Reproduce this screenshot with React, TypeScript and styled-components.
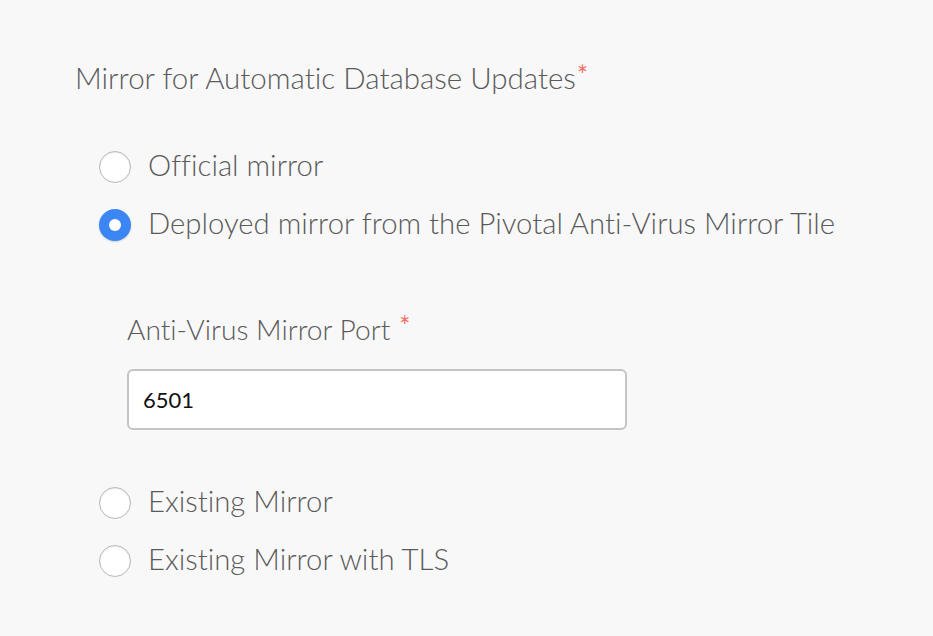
import React from "react";
import styled, { createGlobalStyle } from "styled-components";

const Global = createGlobalStyle`
  html, body { margin: 0; padding: 0; background: #f8f8f8; }
  body {
    font-family: "Lato", "Open Sans", sans-serif;
    font-variant-ligatures: none;
    font-feature-settings: "liga" 0, "clig" 0;
  }
`;

const Page = styled.div`
  width: 933px;
  height: 636px;
  box-sizing: border-box;
  padding: 58px 0 0 75px;
  background: #f8f8f8;
  color: #666666;
  overflow: hidden;
`;

const Title = styled.div`
  font-size: 29.5px;
  line-height: 40px;
  height: 40px;
  font-weight: 300;
  color: #5a5a5a;
`;

const Star = styled.span<{ $gap?: boolean }>`
  color: #f26b61;
  font-size: 26px;
  font-weight: 400;
  vertical-align: top;
  position: relative;
  top: -3px;
  margin-left: ${(p) => (p.$gap ? "9px" : "1px")};
`;

const List = styled.div<{ $top: number }>`
  display: flex;
  flex-direction: column;
  margin: ${(p) => p.$top}px 0 0 24px;
`;

const Row = styled.label`
  display: flex;
  align-items: center;
  height: 58px;
  gap: 17px;
  cursor: pointer;
`;

const Radio = styled.span<{ $checked?: boolean }>`
  width: 32px;
  height: 32px;
  border-radius: 50%;
  box-sizing: border-box;
  flex: none;
  display: flex;
  align-items: center;
  justify-content: center;
  background: ${(p) => (p.$checked ? "#3c86f4" : "#ffffff")};
  border: ${(p) => (p.$checked ? "none" : "1.5px solid #b8b8b8")};
  box-shadow: ${(p) =>
    p.$checked ? "0 1px 2px rgba(0,0,0,0.15)" : "inset 0 1px 2px rgba(0,0,0,0.08)"};
  &::after {
    content: "";
    display: ${(p) => (p.$checked ? "block" : "none")};
    width: 12px;
    height: 12px;
    border-radius: 50%;
    background: #ffffff;
  }
`;

const LabelText = styled.span`
  font-size: 29.3px;
  line-height: 40px;
  padding-bottom: 5px;
  font-weight: 300;
  color: #5a5a5a;
`;

const SubField = styled.div`
  display: flex;
  flex-direction: column;
  margin: 55px 0 44px 52px;
`;

const SubLabel = styled.div`
  font-size: 28.2px;
  line-height: 40px;
  height: 40px;
  font-weight: 300;
  color: #5a5a5a;
`;

const Input = styled.input`
  margin-top: 20px;
  width: 500px;
  height: 61px;
  box-sizing: border-box;
  border: 2px solid #c4c4c4;
  border-radius: 6px;
  background: #ffffff;
  padding: 0 14px;
  font-family: "Lato", "Open Sans", sans-serif;
  font-size: 22px;
  color: #111111;
  outline: none;
`;

const options = [
  "Official mirror",
  "Deployed mirror from the Pivotal Anti-Virus Mirror Tile",
];
const options2 = ["Existing Mirror", "Existing Mirror with TLS"];

export default function App() {
  return (
    <Page>
      <Global />
      <Title>
        Mirror for Automatic Database Updates<Star>*</Star>
      </Title>
      <List $top={40}>
        {options.map((o, i) => (
          <Row key={o}>
            <Radio $checked={i === 1} />
            <LabelText>{o}</LabelText>
          </Row>
        ))}
      </List>
      <SubField>
        <SubLabel>
          Anti-Virus Mirror Port<Star $gap>*</Star>
        </SubLabel>
        <Input defaultValue="6501" />
      </SubField>
      <List $top={0}>
        {options2.map((o) => (
          <Row key={o}>
            <Radio />
            <LabelText>{o}</LabelText>
          </Row>
        ))}
      </List>
    </Page>
  );
}
